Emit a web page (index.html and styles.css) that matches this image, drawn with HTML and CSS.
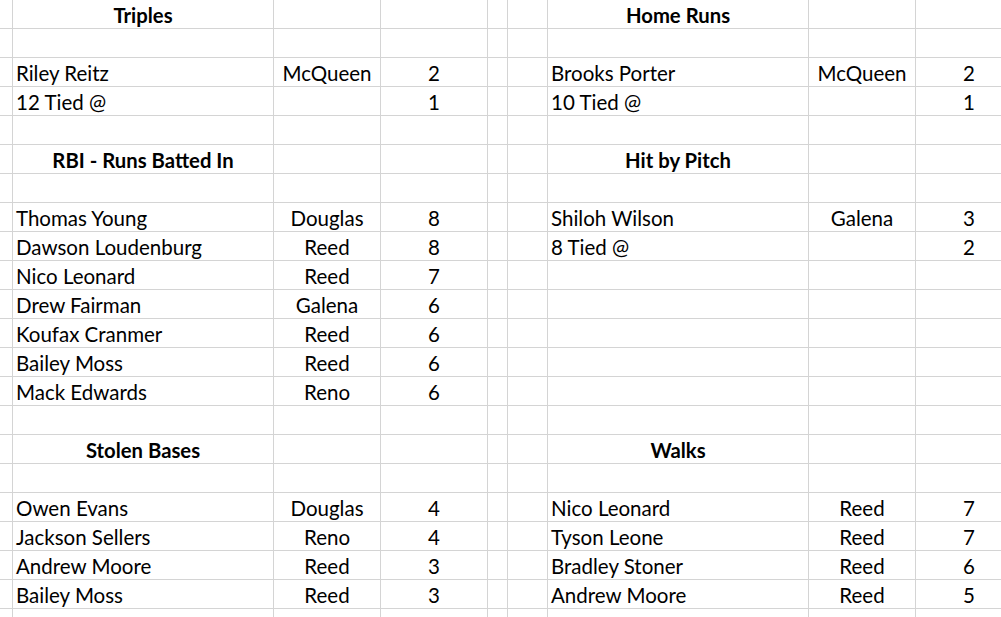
FILE: index.html
```html
<!DOCTYPE html>
<html>
<head>
<meta charset="utf-8">
<link rel="stylesheet" href="styles.css">
</head>
<body>
<div class="sheet">
  <div class="row"><div class="c"></div><div class="c h">Triples</div><div class="c"></div><div class="c"></div><div class="c"></div><div class="c"></div><div class="c h">Home Runs</div><div class="c"></div><div class="c"></div></div>
  <div class="row"><div class="c"></div><div class="c"></div><div class="c"></div><div class="c"></div><div class="c"></div><div class="c"></div><div class="c"></div><div class="c"></div><div class="c"></div></div>
  <div class="row"><div class="c"></div><div class="c n">Riley Reitz</div><div class="c t">McQueen</div><div class="c v">2</div><div class="c"></div><div class="c"></div><div class="c n">Brooks Porter</div><div class="c t">McQueen</div><div class="c v">2</div></div>
  <div class="row"><div class="c"></div><div class="c n">12 Tied @</div><div class="c t"></div><div class="c v">1</div><div class="c"></div><div class="c"></div><div class="c n">10 Tied @</div><div class="c t"></div><div class="c v">1</div></div>
  <div class="row"><div class="c"></div><div class="c"></div><div class="c"></div><div class="c"></div><div class="c"></div><div class="c"></div><div class="c"></div><div class="c"></div><div class="c"></div></div>
  <div class="row"><div class="c"></div><div class="c h">RBI - Runs Batted In</div><div class="c"></div><div class="c"></div><div class="c"></div><div class="c"></div><div class="c h">Hit by Pitch</div><div class="c"></div><div class="c"></div></div>
  <div class="row"><div class="c"></div><div class="c"></div><div class="c"></div><div class="c"></div><div class="c"></div><div class="c"></div><div class="c"></div><div class="c"></div><div class="c"></div></div>
  <div class="row"><div class="c"></div><div class="c n">Thomas Young</div><div class="c t">Douglas</div><div class="c v">8</div><div class="c"></div><div class="c"></div><div class="c n">Shiloh Wilson</div><div class="c t">Galena</div><div class="c v">3</div></div>
  <div class="row"><div class="c"></div><div class="c n">Dawson Loudenburg</div><div class="c t">Reed</div><div class="c v">8</div><div class="c"></div><div class="c"></div><div class="c n">8 Tied @</div><div class="c t"></div><div class="c v">2</div></div>
  <div class="row"><div class="c"></div><div class="c n">Nico Leonard</div><div class="c t">Reed</div><div class="c v">7</div><div class="c"></div><div class="c"></div><div class="c"></div><div class="c"></div><div class="c"></div></div>
  <div class="row"><div class="c"></div><div class="c n">Drew Fairman</div><div class="c t">Galena</div><div class="c v">6</div><div class="c"></div><div class="c"></div><div class="c"></div><div class="c"></div><div class="c"></div></div>
  <div class="row"><div class="c"></div><div class="c n">Koufax Cranmer</div><div class="c t">Reed</div><div class="c v">6</div><div class="c"></div><div class="c"></div><div class="c"></div><div class="c"></div><div class="c"></div></div>
  <div class="row"><div class="c"></div><div class="c n">Bailey Moss</div><div class="c t">Reed</div><div class="c v">6</div><div class="c"></div><div class="c"></div><div class="c"></div><div class="c"></div><div class="c"></div></div>
  <div class="row"><div class="c"></div><div class="c n">Mack Edwards</div><div class="c t">Reno</div><div class="c v">6</div><div class="c"></div><div class="c"></div><div class="c"></div><div class="c"></div><div class="c"></div></div>
  <div class="row"><div class="c"></div><div class="c"></div><div class="c"></div><div class="c"></div><div class="c"></div><div class="c"></div><div class="c"></div><div class="c"></div><div class="c"></div></div>
  <div class="row"><div class="c"></div><div class="c h">Stolen Bases</div><div class="c"></div><div class="c"></div><div class="c"></div><div class="c"></div><div class="c h">Walks</div><div class="c"></div><div class="c"></div></div>
  <div class="row"><div class="c"></div><div class="c"></div><div class="c"></div><div class="c"></div><div class="c"></div><div class="c"></div><div class="c"></div><div class="c"></div><div class="c"></div></div>
  <div class="row"><div class="c"></div><div class="c n">Owen Evans</div><div class="c t">Douglas</div><div class="c v">4</div><div class="c"></div><div class="c"></div><div class="c n">Nico Leonard</div><div class="c t">Reed</div><div class="c v">7</div></div>
  <div class="row"><div class="c"></div><div class="c n">Jackson Sellers</div><div class="c t">Reno</div><div class="c v">4</div><div class="c"></div><div class="c"></div><div class="c n">Tyson Leone</div><div class="c t">Reed</div><div class="c v">7</div></div>
  <div class="row"><div class="c"></div><div class="c n">Andrew Moore</div><div class="c t">Reed</div><div class="c v">3</div><div class="c"></div><div class="c"></div><div class="c n">Bradley Stoner</div><div class="c t">Reed</div><div class="c v">6</div></div>
  <div class="row"><div class="c"></div><div class="c n">Bailey Moss</div><div class="c t">Reed</div><div class="c v">3</div><div class="c"></div><div class="c"></div><div class="c n">Andrew Moore</div><div class="c t">Reed</div><div class="c v">5</div></div>
  <div class="row"><div class="c"></div><div class="c n"></div><div class="c t"></div><div class="c v"></div><div class="c"></div><div class="c"></div><div class="c n"></div><div class="c t"></div><div class="c v"></div></div>
</div>
</body>
</html>
```

FILE: styles.css
```css
html, body {
  margin: 0;
  padding: 0;
  background: #ffffff;
  overflow: hidden;
}

.sheet {
  display: flex;
  flex-direction: column;
  font-family: "Lato", "Open Sans", sans-serif;
  font-size: 20.5px;
  color: #000000;
}

.row {
  display: grid;
  grid-template-columns: 13px 261px 107px 107px 20px 40px 261px 107px 107px;
  height: 29px;
}

.c {
  box-sizing: border-box;
  height: 29px;
  padding-top: 1px;
  border-right: 1px solid #d4d4d4;
  border-bottom: 1px solid #d4d4d4;
  line-height: 28px;
  white-space: nowrap;
  overflow: visible;
}

.n {
  padding-left: 3px;
  text-align: left;
}

.t,
.v {
  text-align: center;
}

.h {
  text-align: center;
  font-weight: bold;
  font-size: 20.3px;
}
```
